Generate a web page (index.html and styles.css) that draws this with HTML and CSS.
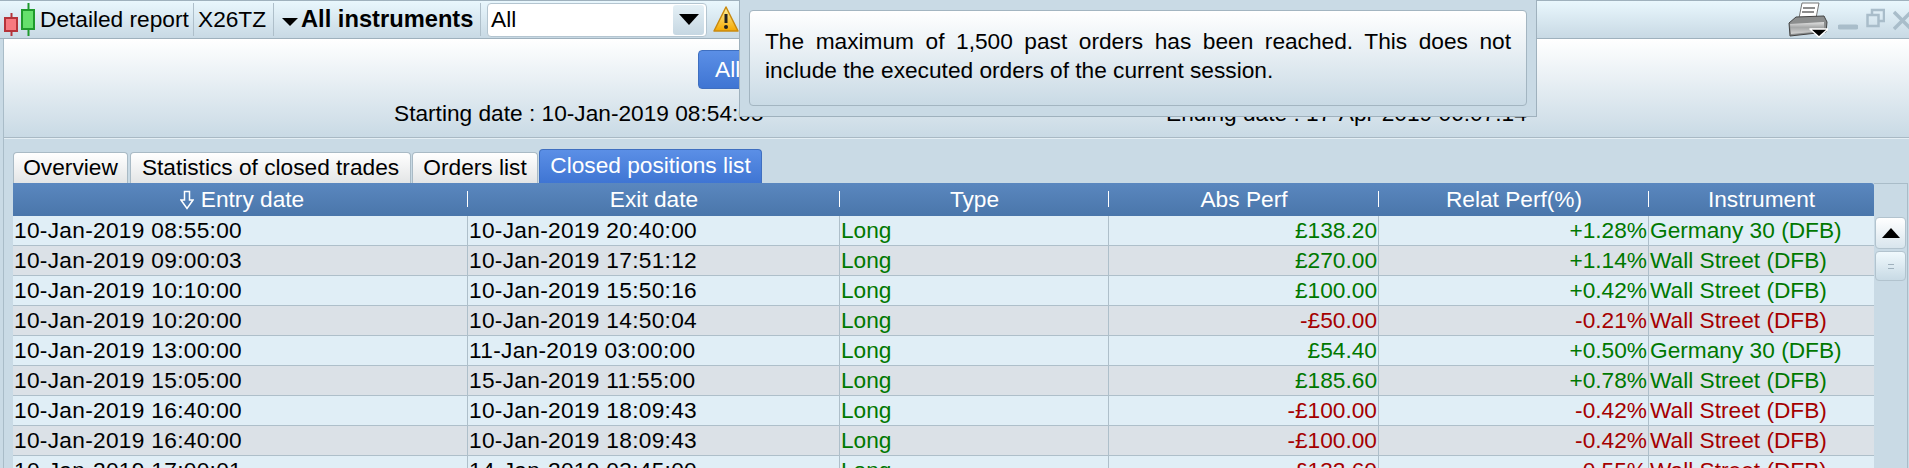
FILE: index.html
```html
<!DOCTYPE html>
<html lang="en">
<head>
<meta charset="utf-8">
<title>Detailed report</title>
<link rel="stylesheet" href="styles.css">
</head>
<body>
<div class="app">
  <header class="toolbar">
    <svg class="logo" viewBox="0 0 36 37" width="36" height="37">
      <path d="M7.500 12V35" stroke="#b5343a" stroke-width="2"/>
      <rect x="1" y="17" width="12" height="13" fill="#f77a80" stroke="#b5343a" stroke-width="2"/>
      <path d="M24.500 2V35" stroke="#1f9a2c" stroke-width="2"/>
      <rect x="18" y="9" width="12" height="19" fill="#66e06c" stroke="#1f9a2c" stroke-width="2"/>
    </svg>
    <span class="tool tool-report">Detailed report</span>
    <span class="tool tool-account">X26TZ</span>
    <span class="tool tool-filter"><i class="caret"></i><b>All instruments</b></span>
    <div class="select"><span>All</span><span class="select-btn"><i class="caret caret-lg"></i></span></div>
    <svg class="warn" viewBox="0 0 26 26" width="26" height="26">
      <defs><linearGradient id="wg" x1="0" y1="0" x2="0" y2="1"><stop offset="0" stop-color="#fff3a0"/><stop offset="1" stop-color="#f5a800"/></linearGradient></defs>
      <path d="M13 1 25 25H1Z" fill="url(#wg)" stroke="#c98a10" stroke-width="1.500" stroke-linejoin="round"/>
      <path d="M13 8v9" stroke="#222" stroke-width="3"/>
      <circle cx="13" cy="21" r="2" fill="#222"/>
    </svg>
    <div class="spacer"></div>
    <svg class="printer" viewBox="0 0 40 37" width="40" height="37">
      <defs><linearGradient id="pg" x1="0" y1="0" x2="0" y2="1"><stop offset="0" stop-color="#e2e2e2"/><stop offset="0.450" stop-color="#a6a8a8"/><stop offset="1" stop-color="#d4d4d4"/></linearGradient></defs>
      <path d="M14 2H31L28 17H11Z" fill="#fff" stroke="#777"/>
      <path d="M15 7H27M14 11H26" stroke="#8d8d8d" stroke-width="2"/>
      <path d="M8 16 36 15 39 21 38 31 2 35 1 22Z" fill="#8b8d8d" stroke="#444"/>
      <path d="M2 23 36 21V30L3 33Z" fill="url(#pg)"/>
      <path d="M22 28H40L31 36Z" fill="#000" stroke="#fff" stroke-width="1.500" stroke-linejoin="round"/>
    </svg>
    <div class="winbtns">
      <svg viewBox="0 0 20 37" width="20" height="37"><path d="M2 26H18" stroke="#a9bdca" stroke-width="5" stroke-linecap="round"/></svg>
      <svg viewBox="0 0 19 37" width="19" height="37"><path d="M6 13V9H18V20H13" fill="none" stroke="#a9bdca" stroke-width="2.500"/><rect x="1.500" y="14" width="11" height="11" fill="none" stroke="#a9bdca" stroke-width="2.500"/></svg>
      <svg viewBox="0 0 16 37" width="16" height="37"><path d="M1 11 18 28M18 11 1 28" stroke="#a9bdca" stroke-width="3.500"/></svg>
    </div>
  </header>

  <main class="panel">
    <section class="summary">
      <div class="range-row"><button class="range-btn">All</button></div>
      <div class="dates">
        <span class="date-start">Starting date : 10-Jan-2019 08:54:05</span>
        <span class="date-end">Ending date : 17-Apr-2019 06:07:14</span>
      </div>
    </section>

    <section class="content">
      <nav class="tabs">
        <span class="tab tab-overview">Overview</span>
        <span class="tab tab-stats">Statistics of closed trades</span>
        <span class="tab tab-orders">Orders list</span>
        <span class="tab tab-active">Closed positions list</span>
      </nav>
      <div class="grid-wrap">
        <div class="grid">
          <div class="row head">
            <div class="cell cell-sorted"><svg class="sort" viewBox="0 0 14 20" width="14" height="20"><path d="M4.500 1.500H9.500V10H13L7 18.500 1 10H4.500Z" fill="none" stroke="#fff" stroke-width="1.500"/></svg>Entry date</div>
            <div class="cell">Exit date</div>
            <div class="cell">Type</div>
            <div class="cell">Abs Perf</div>
            <div class="cell">Relat Perf(%)</div>
            <div class="cell">Instrument</div>
          </div>
          <div class="row up"><div class="cell date">10-Jan-2019 08:55:00</div><div class="cell date">10-Jan-2019 20:40:00</div><div class="cell c-type">Long</div><div class="cell num pl">£138.20</div><div class="cell num pl">+1.28%</div><div class="cell pl">Germany 30 (DFB)</div></div>
          <div class="row alt up"><div class="cell date">10-Jan-2019 09:00:03</div><div class="cell date">10-Jan-2019 17:51:12</div><div class="cell c-type">Long</div><div class="cell num pl">£270.00</div><div class="cell num pl">+1.14%</div><div class="cell pl">Wall Street (DFB)</div></div>
          <div class="row up"><div class="cell date">10-Jan-2019 10:10:00</div><div class="cell date">10-Jan-2019 15:50:16</div><div class="cell c-type">Long</div><div class="cell num pl">£100.00</div><div class="cell num pl">+0.42%</div><div class="cell pl">Wall Street (DFB)</div></div>
          <div class="row alt down"><div class="cell date">10-Jan-2019 10:20:00</div><div class="cell date">10-Jan-2019 14:50:04</div><div class="cell c-type">Long</div><div class="cell num pl">-£50.00</div><div class="cell num pl">-0.21%</div><div class="cell pl">Wall Street (DFB)</div></div>
          <div class="row up"><div class="cell date">10-Jan-2019 13:00:00</div><div class="cell date">11-Jan-2019 03:00:00</div><div class="cell c-type">Long</div><div class="cell num pl">£54.40</div><div class="cell num pl">+0.50%</div><div class="cell pl">Germany 30 (DFB)</div></div>
          <div class="row alt up"><div class="cell date">10-Jan-2019 15:05:00</div><div class="cell date">15-Jan-2019 11:55:00</div><div class="cell c-type">Long</div><div class="cell num pl">£185.60</div><div class="cell num pl">+0.78%</div><div class="cell pl">Wall Street (DFB)</div></div>
          <div class="row down"><div class="cell date">10-Jan-2019 16:40:00</div><div class="cell date">10-Jan-2019 18:09:43</div><div class="cell c-type">Long</div><div class="cell num pl">-£100.00</div><div class="cell num pl">-0.42%</div><div class="cell pl">Wall Street (DFB)</div></div>
          <div class="row alt down"><div class="cell date">10-Jan-2019 16:40:00</div><div class="cell date">10-Jan-2019 18:09:43</div><div class="cell c-type">Long</div><div class="cell num pl">-£100.00</div><div class="cell num pl">-0.42%</div><div class="cell pl">Wall Street (DFB)</div></div>
          <div class="row down"><div class="cell date">10-Jan-2019 17:00:01</div><div class="cell date">14-Jan-2019 03:45:00</div><div class="cell c-type">Long</div><div class="cell num pl">-£132.60</div><div class="cell num pl">-0.55%</div><div class="cell pl">Wall Street (DFB)</div></div>
        </div>
        <aside class="scrollbar">
          <div class="sb-btn"><i class="caret-up"></i></div>
          <div class="sb-thumb"><i class="grip"></i></div>
        </aside>
      </div>
    </section>
  </main>

  <div class="popup">
    <div class="popup-inner">
      <p>The maximum of 1,500 past orders has been reached. This does not include the executed orders of the current session.</p>
    </div>
  </div>
</div>
</body>
</html>
```
FILE: styles.css
```css
* { box-sizing: border-box; }
html, body { margin: 0; padding: 0; }
body {
  width: 1909px;
  height: 468px;
  overflow: hidden;
  font-family: "Liberation Sans", Arial, sans-serif;
  font-size: 22.7px;
  color: #000;
  background: #c9dae5;
}
.app { position: relative; width: 1909px; height: 468px; overflow: hidden; display: flex; flex-direction: column; }

/* toolbar */
.toolbar {
  height: 39px;
  flex: none;
  display: flex;
  align-items: center;
  border-top: 1px solid #9fb1bd;
  border-bottom: 1px solid #9fb1bd;
  background: linear-gradient(#e9f7fd, #c8d9e4);
  padding-left: 4px;
}
.logo { flex: none; }
.tool {
  height: 33px;
  display: flex;
  align-items: center;
  white-space: nowrap;
  border-right: 1px solid #aebfca;
}
.tool-report { width: 154px; }
.tool-account { width: 80px; padding-left: 4px; }
.tool-filter { width: 207px; padding-left: 8px; gap: 3px; }
.tool-filter b { font-weight: 700; font-size: 23.7px; }
.caret { display: block; width: 0; height: 0; border-left: 8px solid transparent; border-right: 8px solid transparent; border-top: 8px solid #000; margin-top: 5px; }
.select .caret-lg { border-left-width: 10px; border-right-width: 10px; border-top-width: 11px; margin-top: 0; }
.select {
  margin-left: 6px;
  width: 220px;
  height: 34px;
  background: #fff;
  border: 1px solid #b4c5d0;
  border-radius: 4px;
  display: flex;
  align-items: center;
  justify-content: space-between;
  padding-left: 3px;
  padding-right: 2px;
}
.select-btn { width: 31px; height: 30px; background: linear-gradient(#e4f0f6, #c6d7e2); border-radius: 3px; display: flex; align-items: center; justify-content: center; }
.warn { margin-left: 6px; flex: none; margin-top: -1px; }
.spacer { flex: 1; }
.printer { flex: none; margin-right: 10px; }
.winbtns { display: flex; gap: 8px; flex: none; }

/* panel */
.panel {
  flex: 1;
  margin-left: 3px;
  border-left: 1px solid #a9bcc8;
  min-height: 0;
  display: flex;
  flex-direction: column;
  background: #c9dae5;
}
.summary {
  height: 99px;
  flex: none;
  background: linear-gradient(#ffffff, #c9dae5);
  border-bottom: 1px solid #a9b9c4;
  box-shadow: 0 1px 0 #e4eef4;
}
.range-row { padding: 11px 0 0 694px; height: 50px; }
.range-btn {
  display: block;
  width: 200px;
  height: 39px;
  border: 1px solid #3f6fc0;
  border-radius: 4px;
  background: linear-gradient(#5b8fe6, #3f75d3);
  color: #fff;
  font: inherit;
  text-align: left;
  padding: 0 0 0 16px;
}
.dates { display: flex; height: 46px; align-items: flex-start; padding-top: 11px; white-space: nowrap; }
.date-start { margin-left: 390px; width: 772px; }

.content { flex: 1; min-height: 0; padding: 11px 0 0 9px; }
.tabs { display: flex; align-items: flex-end; height: 34px; gap: 2px; }
.tab {
  height: 31px;
  display: flex;
  align-items: center;
  justify-content: center;
  padding-bottom: 2px;
  border: 1px solid #a9bac5;
  border-bottom: 0;
  border-radius: 4px 4px 0 0;
  background: linear-gradient(#ffffff, #e3e5e6);
  white-space: nowrap;
}
.tab-overview { width: 115px; }
.tab-stats { width: 281px; }
.tab-orders { width: 126px; margin-left: -1px; }
.tab-active {
  width: 223px;
  height: 34px;
  margin-left: -1px;
  color: #fff;
  background: linear-gradient(#5b8fe6, #3f75d3);
  border-color: #3f6fc0;
}
.grid-wrap { display: flex; width: 1895px; height: 400px; border-right: 1px solid #a9bcc8; }
.grid { width: 1861px; flex: none; overflow: hidden; }
.row {
  display: grid;
  grid-template-columns: 455px 372px 269px 270px 270px 225px;
  height: 30px;
  line-height: 29px;
  border-bottom: 1px solid #aebfca;
  background: #e0eef6;
}
.row.alt { background: #dbe1e7; }
.row.head {
  height: 33px;
  line-height: 32px;
  border-bottom: 0;
  border-radius: 0 3px 0 0;
  background: linear-gradient(#5a87bf, #4a76aa);
  color: #fff;
  text-align: center;
}
.cell { padding: 0 1px; border-right: 1px solid #aebfca; white-space: nowrap; overflow: hidden; }
.cell:last-child { border-right: 0; }
.date { letter-spacing: 0.300px; }
.head .cell { border-right: 0; position: relative; }
.head .cell:not(:last-child)::after {
  content: "";
  position: absolute;
  right: 0;
  top: 8px;
  height: 16px;
  border-right: 1px solid #fff;
}
.head .cell-sorted { padding-left: 4px; }
.sort { vertical-align: -3px; margin-right: 7px; }
.num { text-align: right; }
.c-type { color: #007800; }
.up .pl { color: #007800; }
.down .pl { color: #a50000; }
.scrollbar { flex: 1; border-top: 1px solid #a9bcc8; padding: 33px 1px 0 1px; display: flex; flex-direction: column; gap: 2px; }
.sb-btn, .sb-thumb {
  height: 32px;
  border: 1px solid #b2c3ce;
  border-radius: 4px;
  background: linear-gradient(#ffffff, #d8e5ed);
  display: flex;
  align-items: center;
  justify-content: center;
}
.sb-thumb { height: 30px; background: linear-gradient(#f0f9fd, #c8dae5); }
.caret-up { display: block; width: 0; height: 0; border-left: 9px solid transparent; border-right: 9px solid transparent; border-bottom: 10px solid #000; }
.grip { display: block; width: 6px; height: 5px; border-top: 1px solid #9fb1bd; border-bottom: 1px solid #9fb1bd; }

/* popup */
.popup {
  position: absolute;
  left: 739px;
  top: 0;
  width: 798px;
  height: 117px;
  padding: 10px 9px;
  background: #c9dae5;
  border: 1px solid #9fb1bd;
  border-top: 0;
}
.popup-inner {
  height: 96px;
  border: 1px solid #a3b5c1;
  border-radius: 4px;
  background: linear-gradient(#ffffff, #c9dae5);
  padding: 16px 15px 0;
}
.popup-inner p { margin: 0; line-height: 29px; text-align: justify; }
```
